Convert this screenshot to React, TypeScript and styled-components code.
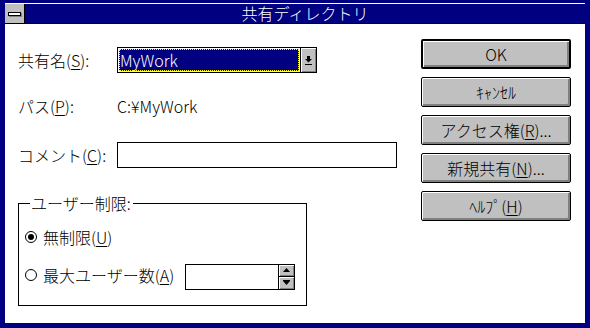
import React from "react";
import styled, { createGlobalStyle } from "styled-components";

const NAVY = "#000080";
const FACE = "#c0c0c0";
const SHADOW = "#808080";

const GlobalStyle = createGlobalStyle`
	html, body {
		margin: 0;
		padding: 0;
		background: #ffffff;
	}
	* {
		box-sizing: border-box;
	}
	body {
		font-family: "Noto Sans CJK JP", "Liberation Sans", sans-serif;
		font-weight: 300;
		font-size: 16px;
		color: #000000;
	}
`;

const Frame = styled.div`
	width: 590px;
	height: 328px;
	display: flex;
	flex-direction: column;
	background: #ffffff;
	border-style: solid;
	border-color: ${ NAVY };
	border-width: 3px 5px 5px 5px;
	overflow: hidden;
`;

const TitleBar = styled.div`
	display: flex;
	height: 21px;
	border-top: 1px solid #ffffff;
	border-bottom: 1px solid #000000;
	flex-shrink: 0;
`;

const SysMenu = styled.div`
	width: 20px;
	display: flex;
	align-items: center;
	justify-content: center;
	background: ${ FACE };
	border-right: 1px solid #000000;
`;

const SysBar = styled.div`
	width: 13px;
	height: 4px;
	background: #ffffff;
	border: 1px solid #000000;
	box-shadow: 1px 1px 0 ${ SHADOW };
`;

const Caption = styled.div`
	flex: 1;
	display: flex;
	align-items: center;
	justify-content: center;
	background: ${ NAVY };
	color: #ffffff;
	font-size: 16px;
	line-height: 19px;
`;

const Body = styled.div`
	flex: 1;
	display: flex;
	justify-content: space-between;
	padding: 0 14px 0 13px;
`;

const Form = styled.div`
	display: flex;
	flex-direction: column;
	padding-top: 23px;
`;

const Row = styled.div<{ $gap: number }>`
	display: grid;
	grid-template-columns: 99px auto;
	align-items: center;
	height: 26px;
	margin-top: ${ ({ $gap }) => $gap }px;
	white-space: nowrap;
`;

const Label = styled.span`
	line-height: 20px;
`;

const Mn = styled.span`
	text-decoration: underline;
	text-underline-offset: 2px;
`;

const Combo = styled.div`
	display: flex;
	width: 200px;
	height: 26px;
	border: 1px solid #000000;
	background: #ffffff;
`;

const ComboText = styled.div`
	flex: 1;
	display: flex;
	align-items: center;
	margin: 1px;
	padding-left: 1px;
	background: ${ NAVY };
	color: #ffffff;
	outline: 1px dotted #ffff00;
	outline-offset: -1px;
`;

const ArrowButton = styled.div<{ $w: number }>`
	width: ${ ({ $w }) => $w }px;
	display: flex;
	align-items: center;
	justify-content: center;
	background: ${ FACE };
	border-left: 1px solid #000000;
	box-shadow: inset 1px 1px 0 #ffffff, inset -1px -1px 0 ${ SHADOW };
`;

const Field = styled.div<{ $w: number }>`
	width: ${ ({ $w }) => $w }px;
	height: 26px;
	border: 1px solid #000000;
	background: #ffffff;
`;

const Group = styled.fieldset`
	width: 289px;
	height: 113px;
	margin: 25px 0 0 0;
	padding: 0 0 0 6px;
	border: 1px solid #000000;
	min-width: 0;
`;

const Legend = styled.legend`
	margin-left: 5px;
	padding: 0 2px 0 1px;
	line-height: 20px;
`;

const RadioRow = styled.div<{ $gap: number; $h: number }>`
	display: flex;
	align-items: center;
	height: ${ ({ $h }) => $h }px;
	margin-top: ${ ({ $gap }) => $gap }px;
	white-space: nowrap;
`;

const Radio = styled.span<{ $on: boolean }>`
	width: 12px;
	height: 12px;
	margin-right: 6px;
	border: 1px solid #000000;
	border-radius: 50%;
	display: flex;
	align-items: center;
	justify-content: center;

	&::after {
		content: "";
		width: 6px;
		height: 6px;
		border-radius: 50%;
		background: ${ ({ $on }) => $on ? "#000000" : "transparent" };
	}
`;

const Spin = styled.div`
	display: flex;
	width: 110px;
	height: 26px;
	margin-left: 11px;
	margin-top: 3px;
	border: 1px solid #000000;
	background: #ffffff;
`;

const SpinInput = styled.div`
	flex: 1;
`;

const SpinButtons = styled.div`
	width: 16px;
	display: flex;
	flex-direction: column;
	border-left: 1px solid #000000;
`;

const SpinButton = styled.div<{ $last?: boolean }>`
	flex: 1;
	display: flex;
	align-items: center;
	justify-content: center;
	background: ${ FACE };
	border-top: ${ ({ $last }) => $last ? "1px solid #000000" : "none" };
	box-shadow: inset 1px 1px 0 #ffffff, inset -1px -1px 0 ${ SHADOW };
`;

const Buttons = styled.div`
	display: flex;
	flex-direction: column;
	gap: 8px;
	padding-top: 15px;
`;

const Button = styled.div<{ $default?: boolean }>`
	width: 150px;
	height: 30px;
	display: flex;
	align-items: center;
	justify-content: center;
	background: ${ FACE };
	border: ${ ({ $default }) => $default ? 2 : 1 }px solid #000000;
	border-radius: 2px;
	box-shadow: inset 1px 1px 0 #ffffff, inset -2px -2px 0 ${ SHADOW };
	line-height: 20px;
	white-space: nowrap;
`;

const DropArrow = () => (
	<svg width="7" height="9" viewBox="0 0 7 9">
		<rect x="2" y="0" width="3" height="3" fill="#000" />
		<polygon points="0,3 7,3 3.5,6.5" fill="#000" />
		<rect x="0" y="8" width="7" height="1" fill="#000" />
	</svg>
);

const SpinArrow = ({ up }: { up: boolean }) => (
	<svg width="7" height="5" viewBox="0 0 7 5">
		{ up
			? <polygon points="3.5,0 7,4 0,4" fill="#000" />
			: <>
				<rect x="0" y="0" width="7" height="1" fill="#000" />
				<polygon points="0,1 7,1 3.5,5" fill="#000" />
			</> }
	</svg>
);

export default function App() {
	return (
		<>
			<GlobalStyle />
			<Frame>
				<TitleBar>
					<SysMenu><SysBar /></SysMenu>
					<Caption>共有ディレクトリ</Caption>
				</TitleBar>
				<Body>
					<Form>
						<Row $gap={ 0 }>
							<Label>共有名(<Mn>S</Mn>):</Label>
							<Combo>
								<ComboText>MyWork</ComboText>
								<ArrowButton $w={ 16 }><DropArrow /></ArrowButton>
							</Combo>
						</Row>
						<Row $gap={ 20 }>
							<Label>パス(<Mn>P</Mn>):</Label>
							<Label>C:¥MyWork</Label>
						</Row>
						<Row $gap={ 23 }>
							<Label>コメント(<Mn>C</Mn>):</Label>
							<Field $w={ 280 } />
						</Row>
						<Group>
							<Legend>ユーザー制限:</Legend>
							<RadioRow $gap={ 14 } $h={ 20 }>
								<Radio $on />
								<Label>無制限(<Mn>U</Mn>)</Label>
							</RadioRow>
							<RadioRow $gap={ 15 } $h={ 26 }>
								<Radio $on={ false } />
								<Label>最大ユーザー数(<Mn>A</Mn>)</Label>
								<Spin>
									<SpinInput />
									<SpinButtons>
										<SpinButton><SpinArrow up /></SpinButton>
										<SpinButton $last><SpinArrow up={ false } /></SpinButton>
									</SpinButtons>
								</Spin>
							</RadioRow>
						</Group>
					</Form>
					<Buttons>
						<Button $default>OK</Button>
						<Button>ｷｬﾝｾﾙ</Button>
						<Button>アクセス権(<Mn>R</Mn>)...</Button>
						<Button>新規共有(<Mn>N</Mn>)...</Button>
						<Button>ﾍﾙﾌﾟ(<Mn>H</Mn>)</Button>
					</Buttons>
				</Body>
			</Frame>
		</>
	);
}
